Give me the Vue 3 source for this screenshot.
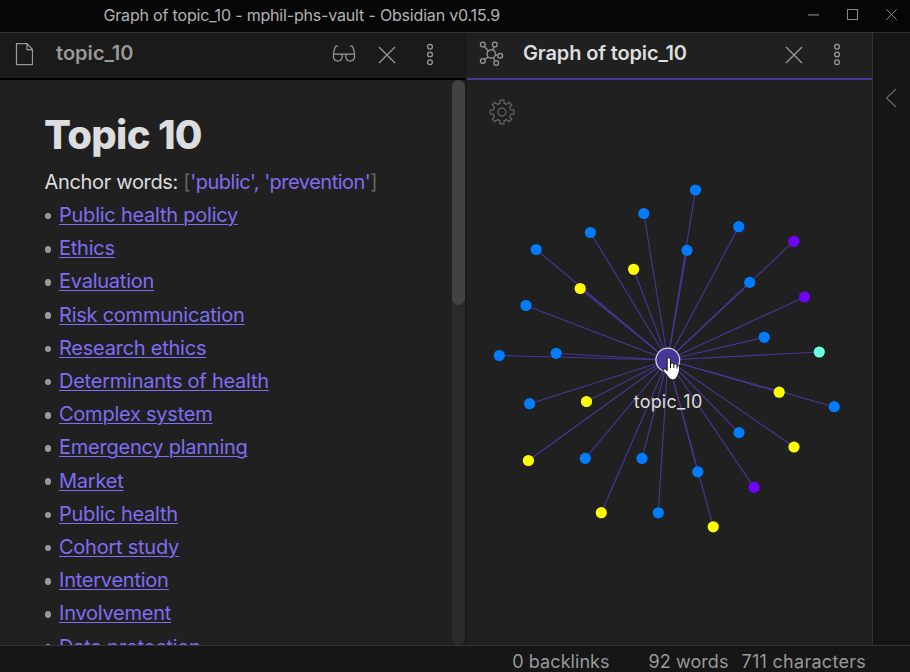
<script setup>
const topics = [
  'Public health policy', 'Ethics', 'Evaluation', 'Risk communication',
  'Research ethics', 'Determinants of health', 'Complex system',
  'Emergency planning', 'Market', 'Public health', 'Cohort study',
  'Intervention', 'Involvement', 'Data protection',
]

const hub = { x: 667.8, y: 360 }
const groups = {
  '#007dff': [
    [695.5, 190], [643.8, 213.5], [590.4, 232.5], [536.2, 249.5], [687, 250.3],
    [738.8, 226.7], [749.7, 282.4], [526, 305.5], [499.3, 355.5], [556.2, 353.3],
    [764.3, 337.3], [529.6, 403.7], [834.2, 406.7], [739, 432.6], [585.3, 458.3],
    [642, 458.4], [697.8, 471.8], [658.3, 512.8],
  ],
  '#ffff00': [
    [633.6, 269.3], [580.2, 288.5], [586.5, 401.5], [779.2, 392.2], [794, 447],
    [528.4, 460.5], [601.3, 512.7], [713.2, 526.8],
  ],
  '#7300ff': [[793.8, 241.3], [804.5, 297], [754, 487.4]],
  '#66ffdf': [[819.3, 352]],
}
const nodes = Object.entries(groups).flatMap(([color, points]) =>
  points.map(([x, y]) => ({ x, y, color })))

const gearPoints = []
for (let i = 0; i < 8; i++) {
  for (const [offset, radius] of [[-14, 8.9], [-9, 12], [9, 12], [14, 8.9]]) {
    const a = ((i * 45 + offset - 90) * Math.PI) / 180
    gearPoints.push(`${(13 + radius * Math.cos(a)).toFixed(2)},${(13 + radius * Math.sin(a)).toFixed(2)}`)
  }
}
</script>

<template>
  <div class="window">
    <header class="titlebar">
      <span class="app-title">Graph of topic_10 - mphil-phs-vault - Obsidian v0.15.9</span>
      <div class="window-buttons">
        <svg width="11" height="11" viewBox="0 0 11 11"><path d="M0 5.9H11" stroke="#666" stroke-width="1.6" /></svg>
        <svg width="11" height="11" viewBox="0 0 11 11"><rect x=".5" y=".5" width="10" height="10" /></svg>
        <svg width="11" height="11" viewBox="0 0 11 11"><path d="M.3 .3L10.7 10.7M10.7 .3L.3 10.7" /></svg>
      </div>
    </header>
    <main class="workspace">
      <section class="pane note">
        <div class="tab">
          <svg class="file" width="18" height="24" viewBox="0 0 18 24"><path d="M1.5 1.5H12L17.5 7.5V22.5H1.5ZM12 1.5V7.5H17.5" /></svg>
          <span class="tab-title">topic_10</span>
          <svg class="glasses" width="24" height="18" viewBox="0 0 24 18"><path d="M5.6 1.8C4.5 .4 3.4 .9 3 2.4L1.3 8.7M18.4 1.8C19.5 .4 20.6 .9 21 2.4L22.7 8.7M1 9H23M1.5 9V12Q2 16 6 16Q9.5 16 10.2 12V9M13.8 9V12Q14.5 16 18 16Q22 16 22.5 12V9" /></svg>
          <svg class="close" width="18" height="18" viewBox="0 0 18 18"><path d="M1 1L17 17M17 1L1 17" /></svg>
          <svg class="more" width="8" height="23" viewBox="0 0 8 23"><circle cx="4" cy="3.8" r="2.4" /><circle cx="4" cy="11.5" r="2.4" /><circle cx="4" cy="19.2" r="2.4" /></svg>
        </div>
        <div class="note-body">
          <article>
            <h1>Topic 10</h1>
            <p>Anchor words: <span class="bracket">[</span><span class="link">'public', 'prevention'</span><span class="bracket">]</span></p>
            <ul>
              <li v-for="topic in topics" :key="topic"><a>{{ topic }}</a></li>
            </ul>
          </article>
          <div class="scrollbar"><div class="thumb"></div></div>
        </div>
      </section>
      <div class="divider"></div>
      <section class="pane graph">
        <div class="tab active">
          <svg class="network" width="26" height="26" viewBox="0 0 26 26">
            <circle cx="12.3" cy="13" r="4.2" /><circle cx="3.8" cy="3.6" r="2.4" /><circle cx="15.8" cy="3.6" r="2.4" />
            <circle cx="21.2" cy="14.8" r="2.4" /><circle cx="3.8" cy="20" r="2.4" /><circle cx="17.2" cy="22" r="2.4" />
            <path d="M5.5 5.5L9.2 9.8M15 6L13.8 9M16.5 13.8L18.8 14.3M9.2 15.9L5.6 18.4M14.2 16.8L16 19.8" />
          </svg>
          <span class="tab-title">Graph of topic_10</span>
          <svg class="close" width="18" height="18" viewBox="0 0 18 18"><path d="M1 1L17 17M17 1L1 17" /></svg>
          <svg class="more" width="8" height="23" viewBox="0 0 8 23"><circle cx="4" cy="3.8" r="2.4" /><circle cx="4" cy="11.5" r="2.4" /><circle cx="4" cy="19.2" r="2.4" /></svg>
        </div>
        <div class="canvas">
          <svg class="graph-svg" width="405" height="565" viewBox="467 80 405 565">
            <g class="edges"><line v-for="(n, i) in nodes" :key="i" :x1="hub.x" :y1="hub.y" :x2="n.x" :y2="n.y" /></g>
            <circle v-for="(n, i) in nodes" :key="i" :cx="n.x" :cy="n.y" r="5.6" :fill="n.color" />
            <circle class="hub" :cx="hub.x" :cy="hub.y" r="11.9" />
            <text x="668" y="408" text-anchor="middle" textLength="68.5">topic_10</text>
            <path class="pointer" d="M667.2 359.2Q667.2 357.6 668.8 357.6Q670.4 357.6 670.4 359.2V364.2Q671 362.7 672.4 362.9Q673.6 363.1 673.7 364.6Q674.7 363.4 676 364Q677 364.5 677 365.6Q678.3 364.9 679.2 366Q679.7 366.6 679.5 369.5Q679.3 372.5 678 375Q676.5 380 673 380Q669.8 380 668.4 377L664.5 372.4Q662.3 370 663.5 369Q665 368 667.2 370.7Z" />
            <path class="fingers" d="M670.5 364V368M673.8 364.8V368M677 366V368.5" />
          </svg>
          <svg class="gear" width="26" height="26" viewBox="0 0 26 26"><polygon :points="gearPoints.join(' ')" /><circle cx="13" cy="13" r="4" /></svg>
        </div>
      </section>
      <aside class="ribbon"><svg width="12" height="20" viewBox="0 0 12 20"><path d="M11 1L1.5 10L11 19" /></svg></aside>
    </main>
    <footer class="status">
      <span class="backlinks">0 backlinks</span><span class="words">92 words</span><span class="chars">711 characters</span>
    </footer>
  </div>
</template>

<style>
body { margin: 0; background: #202020; }
</style>

<style scoped>
* { box-sizing: border-box; }
.window { width: 910px; height: 672px; display: flex; flex-direction: column; overflow: hidden; background: #202020; color: #dcddde; font-family: Inter, "Liberation Sans", sans-serif; white-space: nowrap; }
svg { fill: none; stroke: #999; stroke-width: 1.25; flex: none; }
.titlebar { height: 33px; flex: none; display: flex; justify-content: space-between; background: #060606; border-bottom: 1px solid #333; padding: 0 13px 0 103.5px; }
.app-title { font-size: 16px; line-height: 31px; letter-spacing: -0.18px; color: #b3b3b3; }
.window-buttons { display: flex; gap: 28px; padding-top: 9px; }
.window-buttons svg { stroke: #888; stroke-width: 1; }
.workspace { flex: 1; min-height: 0; display: flex; }
.pane { display: flex; flex-direction: column; }
.note { width: 465px; }
.graph { width: 405px; }
.divider { width: 2px; background: #1a1a1a; }
.tab { height: 47px; flex: none; display: flex; align-items: center; background: #1a1a1a; border-bottom: 2px solid #000; padding: 0 31px 3px 15px; }
.tab.active { background: #202020; border-color: #483699; padding-left: 12px; }
.tab-title { font-size: 20px; font-weight: 600; line-height: 38px; letter-spacing: 0.03px; color: #999; flex: 1; margin: 0 0 2px 23px; }
.active .tab-title { color: #dcddde; margin-left: 18px; letter-spacing: -0.14px; }
.glasses { margin-right: 21.5px; }
.close { margin-right: 30px; margin-top: 1px; }
.note .more { margin-right: 0.5px; }
.note-body { display: flex; flex: 1; min-height: 0; }
article { flex: 1; padding: 30px 0 0 44.5px; overflow: hidden; font-size: 20px; line-height: 33.2px; letter-spacing: -0.24px; }
h1 { margin: 0 0 0 -0.5px; font-size: 40px; line-height: 50px; font-weight: 800; letter-spacing: -0.7px; }
p { margin: 5.8px 0 0; letter-spacing: -0.33px; }
.bracket { color: #666; }
.link { letter-spacing: -0.5px; }
.link, a { color: #7f6df2; }
a { text-decoration: underline; text-decoration-thickness: 1px; text-underline-offset: 2px; }
ul { list-style: none; margin: 0; padding: 0; }
li { display: flex; align-items: center; gap: 8px; }
li::before { content: ""; width: 6.5px; height: 6.5px; border-radius: 50%; background: #999; position: relative; top: 0.5px; }
.scrollbar { width: 13px; border-radius: 7px; background: #2a2a2a; }
.thumb { height: 225px; border-radius: 7px; background: #424242; }
.canvas { position: relative; flex: 1; min-height: 0; }
.graph-svg { display: block; stroke: none; }
.gear { position: absolute; left: 22px; top: 19px; stroke: #666; stroke-linejoin: round; }
.edges { stroke: #483699; stroke-width: 1.1; }
.hub { fill: #483699; stroke: #dcddde; stroke-width: 1.2; }
text { fill: #dcddde; font-size: 18px; }
.pointer { fill: #fff; stroke: #111; stroke-width: 1; }
.fingers { stroke: #111; stroke-width: 1; }
.ribbon { flex: 1; background: #161616; border-left: 1px solid #333; padding: 54.5px 0 0 12px; }
.ribbon svg { stroke: #666; display: block; }
.status { height: 27px; flex: none; display: flex; justify-content: flex-end; padding-right: 44px; border-top: 1px solid #333; background: #161616; color: #999; font-size: 18px; line-height: 32px; letter-spacing: 0.06px; }
.backlinks { margin-right: 39px; }
.words { margin-right: 13px; }
.chars { letter-spacing: 0.28px; }
</style>
